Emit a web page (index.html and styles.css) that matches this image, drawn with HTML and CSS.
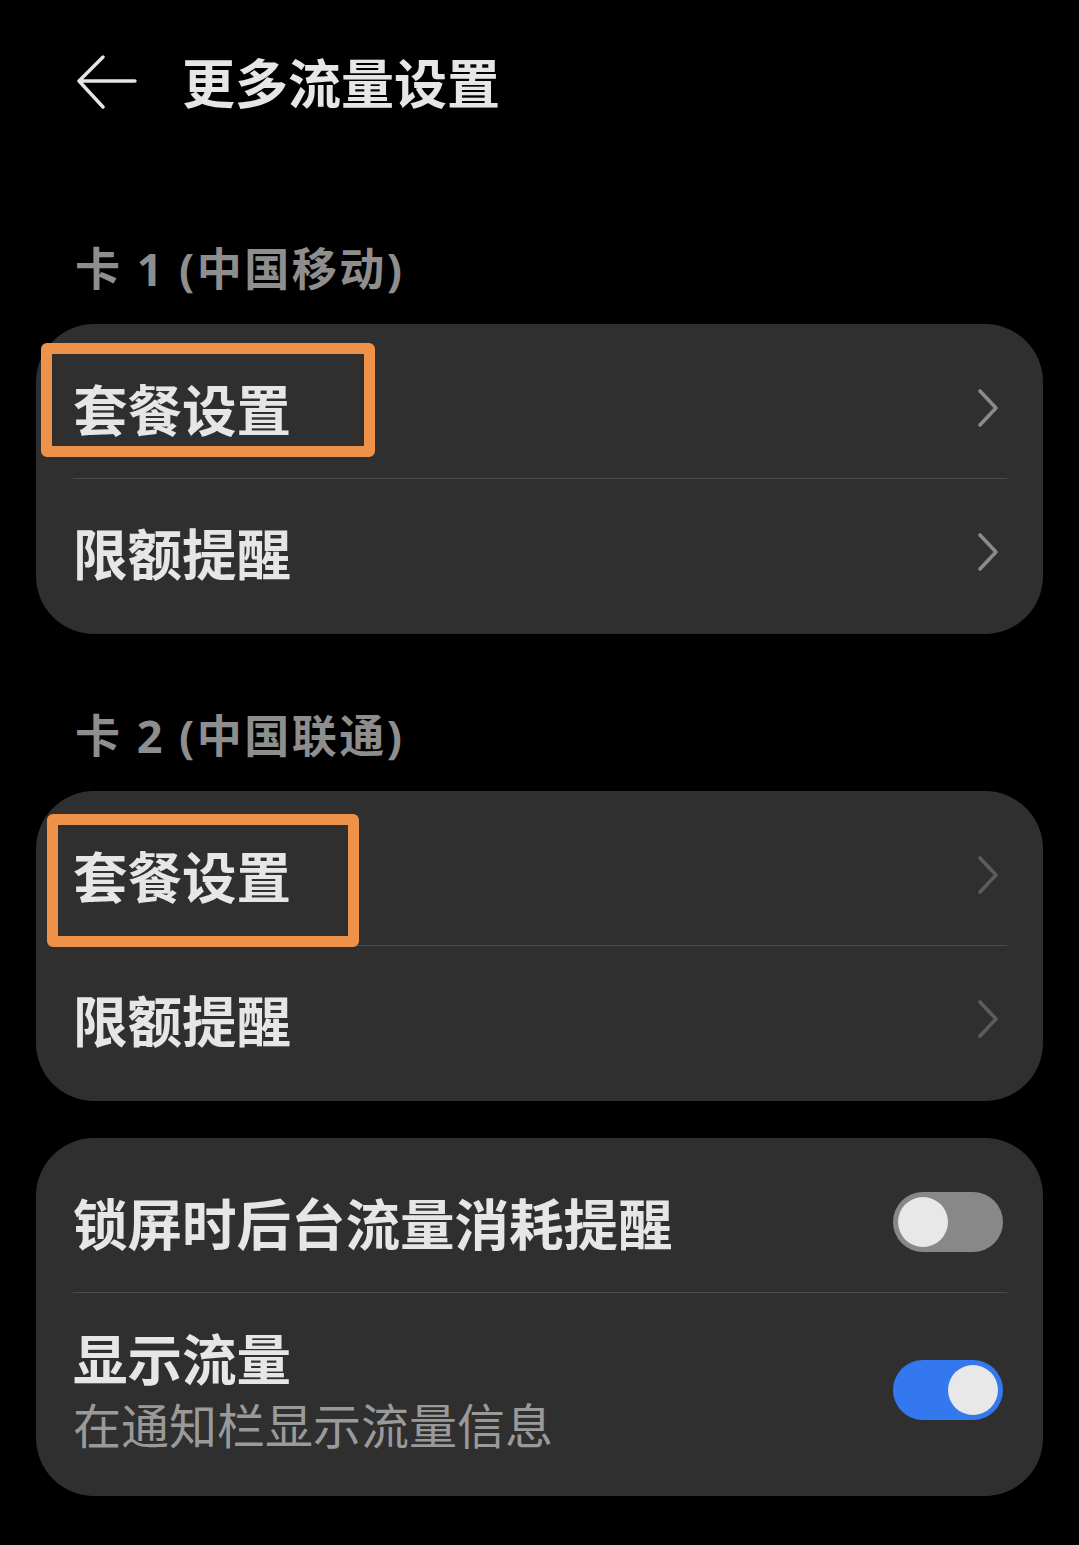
FILE: index.html
```html
<!DOCTYPE html>
<html lang="zh-CN">
<head>
<meta charset="utf-8">
<title>更多流量设置</title>
<link rel="stylesheet" href="styles.css">
</head>
<body>
<div class="page">
  <header class="topbar">
    <svg class="back" viewBox="0 0 62 56" width="62" height="56">
      <path d="M59 26 H4 M27 2 L3 26 L27 52" fill="none" stroke="#e6e6e6" stroke-width="3.4" stroke-linecap="round" stroke-linejoin="round"/>
    </svg>
    <h1 class="title">更多流量设置</h1>
  </header>

  <div class="section-title first">卡 1 (中国移动)</div>
  <div class="card">
    <div class="row top">
      <span class="label">套餐设置</span>
      <svg class="chev" viewBox="0 0 24 40" width="24" height="40"><path d="M4 3 L20 20 L4 37" fill="none" stroke="#8a8a8a" stroke-width="3.6" stroke-linecap="round" stroke-linejoin="round"/></svg>
      <span class="mark mark-a"></span>
    </div>
    <div class="divider"></div>
    <div class="row bottom">
      <span class="label">限额提醒</span>
      <svg class="chev" viewBox="0 0 24 40" width="24" height="40"><path d="M4 3 L20 20 L4 37" fill="none" stroke="#8a8a8a" stroke-width="3.6" stroke-linecap="round" stroke-linejoin="round"/></svg>
    </div>
  </div>

  <div class="section-title">卡 2 (中国联通)</div>
  <div class="card">
    <div class="row top">
      <span class="label">套餐设置</span>
      <svg class="chev" viewBox="0 0 24 40" width="24" height="40"><path d="M4 3 L20 20 L4 37" fill="none" stroke="#5c5c5c" stroke-width="3.6" stroke-linecap="round" stroke-linejoin="round"/></svg>
      <span class="mark mark-b"></span>
    </div>
    <div class="divider"></div>
    <div class="row bottom">
      <span class="label">限额提醒</span>
      <svg class="chev" viewBox="0 0 24 40" width="24" height="40"><path d="M4 3 L20 20 L4 37" fill="none" stroke="#5c5c5c" stroke-width="3.6" stroke-linecap="round" stroke-linejoin="round"/></svg>
    </div>
  </div>

  <div class="card card-last">
    <div class="row top">
      <span class="label">锁屏时后台流量消耗提醒</span>
      <span class="toggle off"><span class="knob"></span></span>
    </div>
    <div class="divider"></div>
    <div class="row tall">
      <div class="texts">
        <span class="label">显示流量</span>
        <span class="sub">在通知栏显示流量信息</span>
      </div>
      <span class="toggle on"><span class="knob"></span></span>
    </div>
  </div>
</div>
</body>
</html>
```

FILE: styles.css
```css
html, body {
  margin: 0;
  padding: 0;
  background: #000;
}
body {
  font-family: "Noto Sans CJK SC", "Noto Sans", sans-serif;
  color: #e6e6e6;
}
.page {
  width: 1079px;
  min-height: 1545px;
  display: flex;
  flex-direction: column;
}
.topbar {
  height: 168px;
  display: flex;
  align-items: center;
  padding-left: 76px;
  gap: 44px;
}
.back {
  display: block;
  margin-top: -2px;
}
.title {
  margin: -6px 0 0 0;
  font-size: 53px;
  font-weight: 700;
  line-height: 1;
  color: #e6e6e6;
}
.section-title {
  margin: 72px 0 25px 75px;
  height: 60px;
  line-height: 60px;
  font-family: "Open Sans", "Noto Sans CJK SC", sans-serif;
  font-size: 45px;
  font-weight: 700;
  letter-spacing: 2.5px;
  color: #8e8e8e;
}
.section-title.first {
  margin-top: 71px;
}
.card {
  margin: 0 36px;
  background: #2f2f2f;
  border-radius: 58px;
  display: flex;
  flex-direction: column;
}
.card-last {
  margin-top: 37px;
}
.row {
  position: relative;
  box-sizing: border-box;
  height: 155px;
  display: flex;
  align-items: center;
  justify-content: space-between;
  padding: 0 40px 0 37px;
}
.row.top {
  height: 154px;
  padding-top: 14px;
}
.row.bottom {
  padding-bottom: 9px;
}
.row.tall {
  height: 203px;
  padding-top: 32px;
  padding-bottom: 41px;
}
.label {
  font-size: 54.5px;
  font-weight: 700;
  line-height: 64px;
  color: #e6e6e6;
}
.texts {
  display: flex;
  flex-direction: column;
  gap: 2px;
}
.sub {
  font-size: 48px;
  line-height: 64px;
  color: #9a9a9a;
}
.chev {
  display: block;
  margin-right: 3px;
}
.divider {
  height: 1px;
  background: #4a4a4a;
  margin: 0 36px 0 37px;
}
.toggle {
  width: 110px;
  height: 60px;
  border-radius: 30px;
  box-sizing: border-box;
  padding: 5px;
  display: flex;
}
.toggle.off {
  background: #888888;
  justify-content: flex-start;
}
.toggle.on {
  background: #3478f0;
  justify-content: flex-end;
}
.knob {
  width: 50px;
  height: 50px;
  border-radius: 50%;
  background: #e8e8e8;
}
.mark {
  position: absolute;
  border: 11px solid #ef9249;
  border-radius: 6px;
  box-sizing: border-box;
}
.mark-a {
  left: 5px;
  top: 19px;
  width: 334px;
  height: 114px;
}
.mark-b {
  left: 11px;
  top: 23px;
  width: 312px;
  height: 133px;
}
```
